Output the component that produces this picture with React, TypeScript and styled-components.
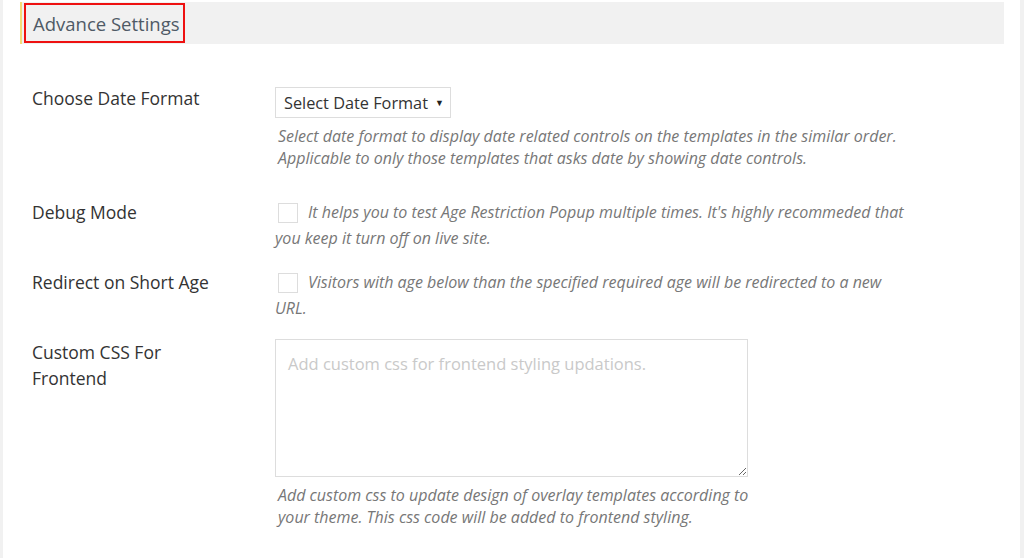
import { createGlobalStyle } from 'styled-components';
import styled from 'styled-components';

const GlobalStyle = createGlobalStyle`
  html, body {
    margin: 0;
    padding: 0;
    background: #f1f1f1;
    font-family: "Open Sans", "Noto Sans", sans-serif;
  }
  * {
    box-sizing: border-box;
  }
`;

const Panel = styled.div`
  margin: 0 4px 0 3px;
  min-height: 558px;
  background: #ffffff;
  padding: 2px 16px 0 17px;
`;

const SectionBar = styled.div`
  height: 42px;
  display: flex;
  align-items: center;
  background: #f1f1f1;
  border-left: 2px solid #f3dc7a;
  padding-left: 2px;
`;

const SectionTitle = styled.h2`
  margin: 0;
  height: 40px;
  display: flex;
  align-items: center;
  padding: 0 3px 0 7px;
  border: 2px solid #ee1111;
  font-size: 18.5px;
  font-weight: 400;
  color: #4f5a66;
`;

const Rows = styled.div`
  display: flex;
  flex-direction: column;
  gap: 18px;
  margin-top: 41px;
  padding-left: 12px;
`;

const Row = styled.div`
  display: grid;
  grid-template-columns: 243px 1fr;
`;

const Label = styled.div`
  font-size: 17.5px;
  line-height: 26px;
  color: #333;
  width: 185px;
`;

const Field = styled.div`
  min-width: 0;
`;

const SelectWrap = styled.div`
  position: relative;
  width: 176px;
  height: 31px;
  margin-top: 2px;
`;

const Select = styled.select`
  appearance: none;
  width: 100%;
  height: 100%;
  border: 1px solid #dddddd;
  border-radius: 0;
  background: #fff;
  padding: 0 14px 0 8px;
  font-family: inherit;
  font-size: 16.3px;
  color: #333;
  outline: none;
`;

const Arrow = styled.span`
  position: absolute;
  right: 7px;
  top: 9px;
  font-size: 9px;
  color: #222;
  pointer-events: none;
`;

const Description = styled.p<{ $width?: number; $bottom?: number }>`
  margin: 7px 0 ${({ $bottom }) => $bottom ?? 0}px;
  padding-left: 3px;
  max-width: ${({ $width }) => ($width ? `${$width}px` : 'none')};
  font-size: 16px;
  line-height: 22px;
  font-style: italic;
  color: #777;
`;

const CheckText = styled.div`
  width: 640px;
  font-size: 16px;
  line-height: 26px;
  font-style: italic;
  color: #777;
`;

const Checkbox = styled.input`
  appearance: none;
  width: 20px;
  height: 20px;
  margin: 0 10px 0 3px;
  border: 1px solid #dddddd;
  background: #fff;
  vertical-align: -5px;
`;

const TextArea = styled.textarea`
  display: block;
  width: 473px;
  height: 138px;
  border: 1px solid #dddddd;
  padding: 11px 12px;
  font-family: inherit;
  font-size: 16.5px;
  line-height: 26px;
  color: #333;
  resize: both;
  outline: none;

  &::placeholder {
    color: #c9c9c9;
  }
`;

export default function App() {
  return (
    <>
      <GlobalStyle />
      <Panel>
        <SectionBar>
          <SectionTitle>Advance Settings</SectionTitle>
        </SectionBar>
        <Rows>
          <Row>
            <Label>Choose Date Format</Label>
            <Field>
              <SelectWrap>
                <Select defaultValue="">
                  <option value="">Select Date Format</option>
                  <option value="dmy">DD/MM/YYYY</option>
                  <option value="mdy">MM/DD/YYYY</option>
                </Select>
                <Arrow>▼</Arrow>
              </SelectWrap>
              <Description $bottom={12}>
                Select date format to display date related controls on the templates in the similar order.
                <br />
                Applicable to only those templates that asks date by showing date controls.
              </Description>
            </Field>
          </Row>
          <Row>
            <Label>Debug Mode</Label>
            <Field>
              <CheckText>
                <Checkbox type="checkbox" />
                It helps you to test Age Restriction Popup multiple times. It's highly recommeded that you keep it turn off on live site.
              </CheckText>
            </Field>
          </Row>
          <Row>
            <Label>Redirect on Short Age</Label>
            <Field>
              <CheckText>
                <Checkbox type="checkbox" />
                Visitors with age below than the specified required age will be redirected to a new URL.
              </CheckText>
            </Field>
          </Row>
          <Row>
            <Label>Custom CSS For Frontend</Label>
            <Field>
              <TextArea placeholder="Add custom css for frontend styling updations." />
              <Description $width={476}>
                Add custom css to update design of overlay templates according to your theme. This css code will be added to frontend styling.
              </Description>
            </Field>
          </Row>
        </Rows>
      </Panel>
    </>
  );
}
